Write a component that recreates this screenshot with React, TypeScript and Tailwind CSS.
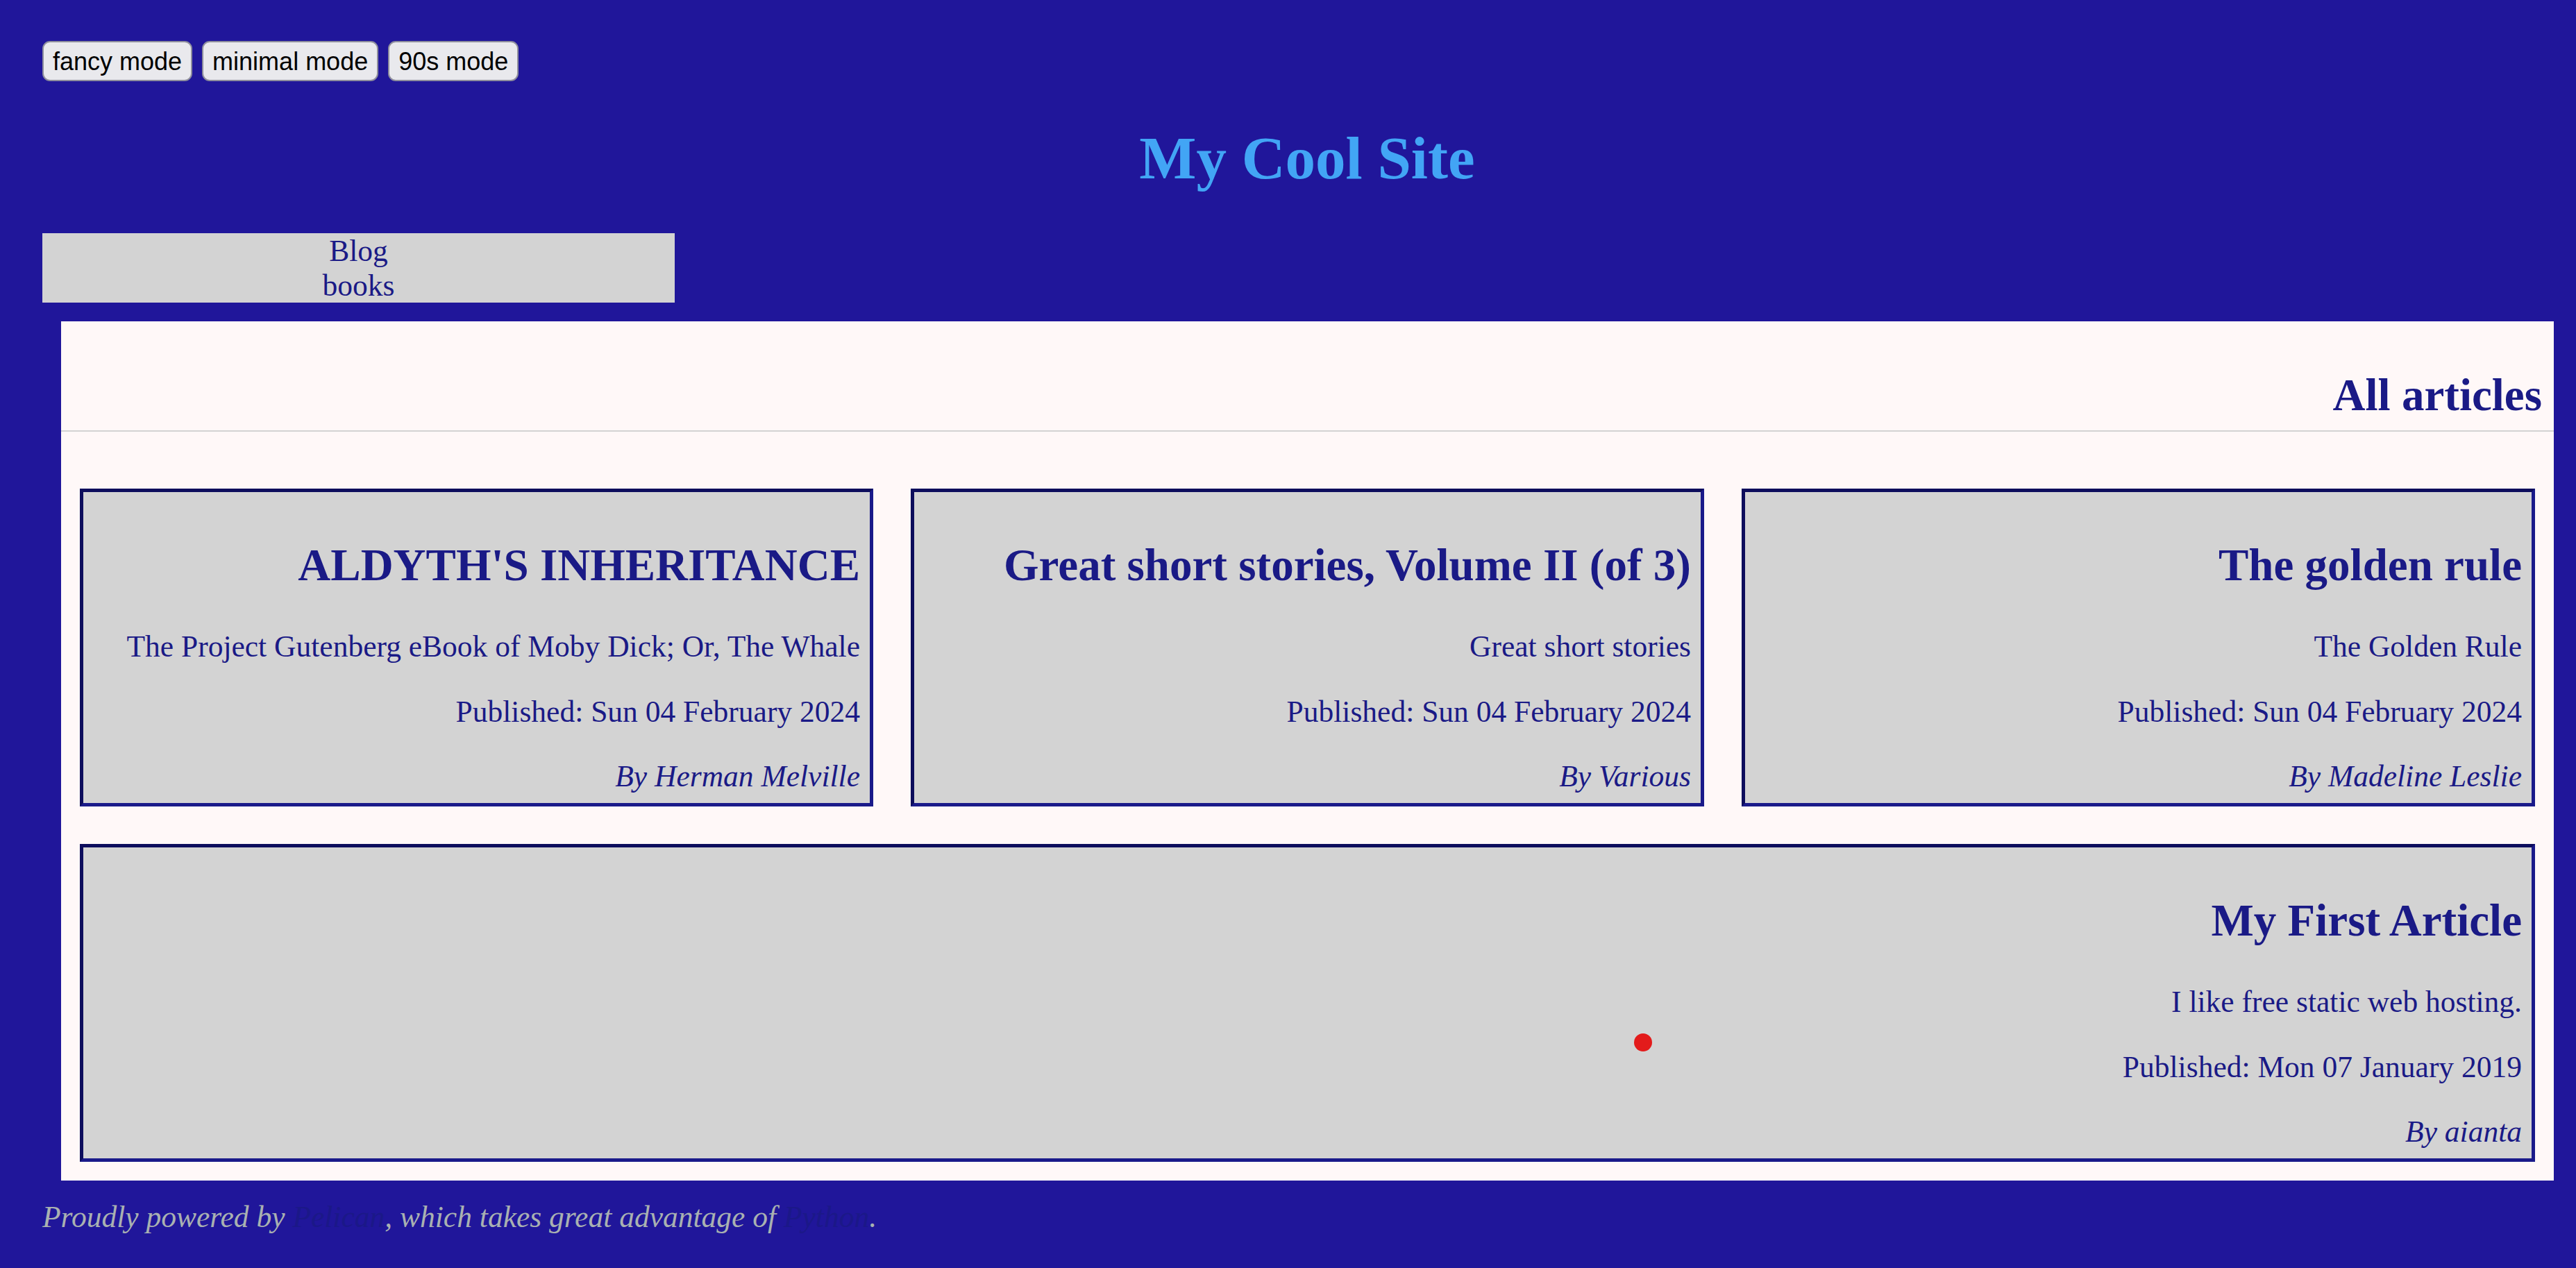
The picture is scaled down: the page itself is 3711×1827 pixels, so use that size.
import React from 'react';

type Article = {
  title: string;
  summary: string;
  published: string;
  author: string;
  wide?: boolean;
};

const articles: Article[] = [
  {
    title: "ALDYTH'S INHERITANCE",
    summary: 'The Project Gutenberg eBook of Moby Dick; Or, The Whale',
    published: 'Sun 04 February 2024',
    author: 'Herman Melville',
  },
  {
    title: 'Great short stories, Volume II (of 3)',
    summary: 'Great short stories',
    published: 'Sun 04 February 2024',
    author: 'Various',
  },
  {
    title: 'The golden rule',
    summary: 'The Golden Rule',
    published: 'Sun 04 February 2024',
    author: 'Madeline Leslie',
  },
  {
    title: 'My First Article',
    summary: 'I like free static web hosting.',
    published: 'Mon 07 January 2019',
    author: 'aianta',
    wide: true,
  },
];

const ModeButton: React.FC<{ label: string }> = ({ label }) => (
  <button className="h-[58px] px-[13px] border-2 border-[#8f8f9d] rounded-[11px] bg-[#e9e9ed] text-black text-[36px] leading-[41px] font-['Liberation_Sans',Arial,sans-serif]">
    {label}
  </button>
);

const ArticleCard: React.FC<{ article: Article }> = ({ article }) => (
  <article
    className={`bg-[#d3d3d3] border-[5px] border-t-[#0d0d5c] border-l-[#0d0d5c] border-b-[#1a1a8a] border-r-[#1a1a8a] p-[14px] text-right ${
      article.wide ? 'col-span-3' : ''
    }`}
  >
    <h2 className="mt-[54px] text-[65px] leading-[75px] font-bold">{article.title}</h2>
    <p className="mt-[54px] text-[43.5px] leading-[50px]">{article.summary}</p>
    <p className="mt-[43.5px] text-[43.5px] leading-[50px]">Published: {article.published}</p>
    <p className="mt-[43.5px] text-[43.5px] leading-[50px] italic">By {article.author}</p>
  </article>
);

export default function App() {
  return (
    <div className="relative min-h-screen bg-[#20169a] pl-[61px] pr-[6px] pt-[59px] pb-[10px] font-['Liberation_Serif','Times_New_Roman',serif] text-[#1a1a86]">
      <div className="flex gap-[14px]">
        <ModeButton label="fancy mode" />
        <ModeButton label="minimal mode" />
        <ModeButton label="90s mode" />
      </div>

      <h1 className="mt-[61px] text-center text-[87px] leading-[100px] font-bold text-[#42a5f5]">
        My Cool Site
      </h1>

      <nav className="mt-[58px] w-[911px] h-[100px] bg-[#d3d3d3] text-center text-[43.5px] leading-[50px]">
        <div>Blog</div>
        <div>books</div>
      </nav>

      <main className="mt-[27px] ml-[27px] mr-[26px] bg-[#fff8f8]">
        <header className="pt-[69px] pb-[13px] pr-[17px] border-b-2 border-[#d3d3d3] text-right">
          <h2 className="text-[65px] leading-[75px] font-bold">All articles</h2>
        </header>
        <section className="grid grid-cols-3 gap-[54px] px-[27px] pt-[82px] pb-[27px]">
          {articles.map((a) => (
            <ArticleCard key={a.title} article={a} />
          ))}
        </section>
      </main>

      <footer className="mt-[27px] text-[43.5px] leading-[50px] italic text-[#a9b1b1]">
        Proudly powered by <a href="#" className="text-[#1b1888]">Pelican</a>, which takes great advantage of{' '}
        <a href="#" className="text-[#1b1888]">Python</a>.
      </footer>

      <div className="absolute left-[2354px] top-[1489px] w-[26px] h-[26px] rounded-full bg-[#e31b1b]" />
    </div>
  );
}
